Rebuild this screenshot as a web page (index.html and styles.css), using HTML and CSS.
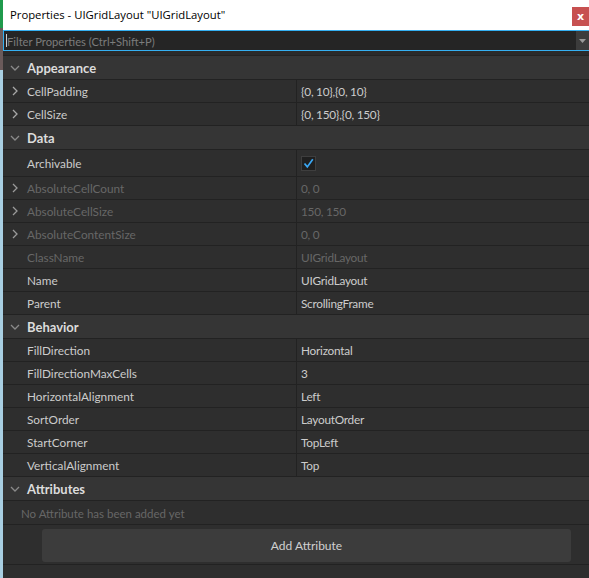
FILE: index.html
```html
<!DOCTYPE html>
<html>
<head>
<meta charset="utf-8">
<link rel="stylesheet" href="styles.css">
</head>
<body>
<div class="window">
  <div class="titlebar">
    <span class="title">Properties - UIGridLayout "UIGridLayout"</span>
    <span class="close">x</span>
  </div>
  <div class="filter">
    <span class="caret"></span>
    <span class="placeholder">Filter Properties (Ctrl+Shift+P)</span>
    <span class="dd"><svg width="7" height="4" viewBox="0 0 7 4"><path d="M0 0h7L3.5 4z" fill="#9a9a9a"/></svg></span>
  </div>
  <div class="spacer"></div>

  <div class="section"><span class="chev"><svg width="10" height="6" viewBox="0 0 10 6"><path d="M1 1l4 4 4-4" stroke="#8a8a8a" stroke-width="1.3" fill="none"/></svg></span><span class="shead">Appearance</span></div>
  <div class="row"><div class="name"><span class="arrow"><svg width="6" height="10" viewBox="0 0 6 10"><path d="M1 1l4 4-4 4" stroke="#a8a8a8" stroke-width="1.3" fill="none"/></svg></span>CellPadding</div><div class="val">{0, 10},{0, 10}</div></div>
  <div class="row"><div class="name"><span class="arrow"><svg width="6" height="10" viewBox="0 0 6 10"><path d="M1 1l4 4-4 4" stroke="#a8a8a8" stroke-width="1.3" fill="none"/></svg></span>CellSize</div><div class="val">{0, 150},{0, 150}</div></div>

  <div class="section"><span class="chev"><svg width="10" height="6" viewBox="0 0 10 6"><path d="M1 1l4 4 4-4" stroke="#8a8a8a" stroke-width="1.3" fill="none"/></svg></span><span class="shead">Data</span></div>
  <div class="row tall"><div class="name"><span class="arrow"></span>Archivable</div><div class="val"><span class="check"><svg width="13" height="13" viewBox="0 0 13 13"><path d="M2.5 6.5l2.8 3.4L10.8 2.3" stroke="#3aa8f5" stroke-width="1.7" fill="none"/></svg></span></div></div>
  <div class="row dis"><div class="name"><span class="arrow"><svg width="6" height="10" viewBox="0 0 6 10"><path d="M1 1l4 4-4 4" stroke="#9a9a9a" stroke-width="1.3" fill="none"/></svg></span>AbsoluteCellCount</div><div class="val">0, 0</div></div>
  <div class="row dis"><div class="name"><span class="arrow"><svg width="6" height="10" viewBox="0 0 6 10"><path d="M1 1l4 4-4 4" stroke="#9a9a9a" stroke-width="1.3" fill="none"/></svg></span>AbsoluteCellSize</div><div class="val">150, 150</div></div>
  <div class="row dis"><div class="name"><span class="arrow"><svg width="6" height="10" viewBox="0 0 6 10"><path d="M1 1l4 4-4 4" stroke="#9a9a9a" stroke-width="1.3" fill="none"/></svg></span>AbsoluteContentSize</div><div class="val">0, 0</div></div>
  <div class="row dis"><div class="name"><span class="arrow"></span>ClassName</div><div class="val">UIGridLayout</div></div>
  <div class="row"><div class="name"><span class="arrow"></span>Name</div><div class="val">UIGridLayout</div></div>
  <div class="row"><div class="name"><span class="arrow"></span>Parent</div><div class="val">ScrollingFrame</div></div>

  <div class="section"><span class="chev"><svg width="10" height="6" viewBox="0 0 10 6"><path d="M1 1l4 4 4-4" stroke="#8a8a8a" stroke-width="1.3" fill="none"/></svg></span><span class="shead">Behavior</span></div>
  <div class="row"><div class="name"><span class="arrow"></span>FillDirection</div><div class="val">Horizontal</div></div>
  <div class="row"><div class="name"><span class="arrow"></span>FillDirectionMaxCells</div><div class="val">3</div></div>
  <div class="row"><div class="name"><span class="arrow"></span>HorizontalAlignment</div><div class="val">Left</div></div>
  <div class="row"><div class="name"><span class="arrow"></span>SortOrder</div><div class="val">LayoutOrder</div></div>
  <div class="row"><div class="name"><span class="arrow"></span>StartCorner</div><div class="val">TopLeft</div></div>
  <div class="row"><div class="name"><span class="arrow"></span>VerticalAlignment</div><div class="val">Top</div></div>

  <div class="section"><span class="chev"><svg width="10" height="6" viewBox="0 0 10 6"><path d="M1 1l4 4 4-4" stroke="#8a8a8a" stroke-width="1.3" fill="none"/></svg></span><span class="shead">Attributes</span></div>
  <div class="empty">No Attribute has been added yet</div>
  <div class="btnrow"><div class="btn">Add Attribute</div></div>
  <div class="rest"></div>
</div>
</body>
</html>
```

FILE: styles.css
```css
html, body {
  margin: 0;
  padding: 0;
}
body {
  width: 589px;
  height: 578px;
  overflow: hidden;
  background: linear-gradient(to bottom, #1f9a4c 0, #1f9a4c 28px, #6a5a5a 28px, #6a5a5a 70px, #a9cfe2 70px);
  font-family: Lato, "Noto Sans", sans-serif;
}
.window {
  margin-left: 3px;
  height: 578px;
  background: #2e2e2e;
  display: flex;
  flex-direction: column;
}
.titlebar {
  height: 30px;
  background: #ffffff;
  display: flex;
  align-items: center;
  justify-content: space-between;
  flex: none;
}
.title {
  font-family: "Open Sans", "Noto Sans", sans-serif;
  font-size: 11.3px;
  color: #000;
  padding-left: 7px;
  margin-top: -1px;
}
.close {
  width: 17px;
  height: 19px;
  background: #c75050;
  color: #fff;
  font-family: "DejaVu Sans", sans-serif;
  font-weight: bold;
  font-size: 11px;
  display: flex;
  align-items: center;
  justify-content: center;
  margin-top: 3px;
}
.filter {
  height: 19px;
  flex: none;
  background: #252525;
  border-top: 1px solid #35b0f2;
  border-bottom: 1px solid #35b0f2;
  border-left: 1px solid #35b0f2;
  display: flex;
  align-items: center;
}
.caret {
  width: 1px;
  height: 13px;
  background: #cfcfcf;
  margin-left: 2px;
}
.placeholder {
  flex: 1;
  font-size: 11.2px;
  color: #7c7c7c;
  padding-top: 1px;
}
.dd {
  width: 13px;
  height: 19px;
  background: #3c3c3c;
  display: flex;
  align-items: center;
  justify-content: center;
}
.spacer {
  height: 4px;
  flex: none;
  background: #2a2a2a;
  border-bottom: 1px solid #232323;
}
.section {
  height: 23px;
  flex: none;
  background: #353535;
  border-bottom: 1px solid #222222;
  display: flex;
  align-items: center;
  padding-top: 1px;
  box-sizing: border-box;
  height: 24px;
}
.chev {
  width: 24px;
  display: flex;
  justify-content: center;
  margin-top: -1px;
}
.shead {
  font-weight: bold;
  font-size: 13px;
  color: #dcdcdc;
}
.row {
  height: 22px;
  flex: none;
  display: grid;
  grid-template-columns: 294px 1fr;
  border-bottom: 1px solid #222222;
  font-size: 11.8px;
  color: #cccccc;
}
.row.tall {
  height: 26px;
}
.row.dis {
  color: #676767;
}
.name {
  display: flex;
  align-items: center;
  border-right: 1px solid #222222;
  padding-top: 1px;
}
.arrow {
  width: 24px;
  display: flex;
  justify-content: center;
  margin-top: -1px;
}
.val {
  display: flex;
  align-items: center;
  padding-left: 4px;
  padding-top: 1px;
  letter-spacing: -0.25px;
}
.check {
  width: 15px;
  height: 15px;
  box-sizing: border-box;
  border: 1px solid #3e3e3e;
  background: #1f1f1f;
  display: flex;
  align-items: center;
  justify-content: center;
}
.empty {
  height: 23px;
  flex: none;
  border-bottom: 1px solid #222222;
  display: flex;
  align-items: center;
  padding-left: 18px;
  padding-top: 1px;
  box-sizing: border-box;
  height: 24px;
  font-size: 11.5px;
  color: #676767;
}
.btnrow {
  flex: none;
  border-bottom: 1px solid #222222;
  padding: 4px 18px 0 39px;
  box-sizing: border-box;
  height: 40px;
}
.btn {
  height: 33px;
  background: #3c3c3c;
  border-radius: 3px;
  display: flex;
  align-items: center;
  justify-content: center;
  font-size: 12px;
  color: #d0d0d0;
}
.rest {
  flex: 1;
  background: #2e2e2e;
}
```
